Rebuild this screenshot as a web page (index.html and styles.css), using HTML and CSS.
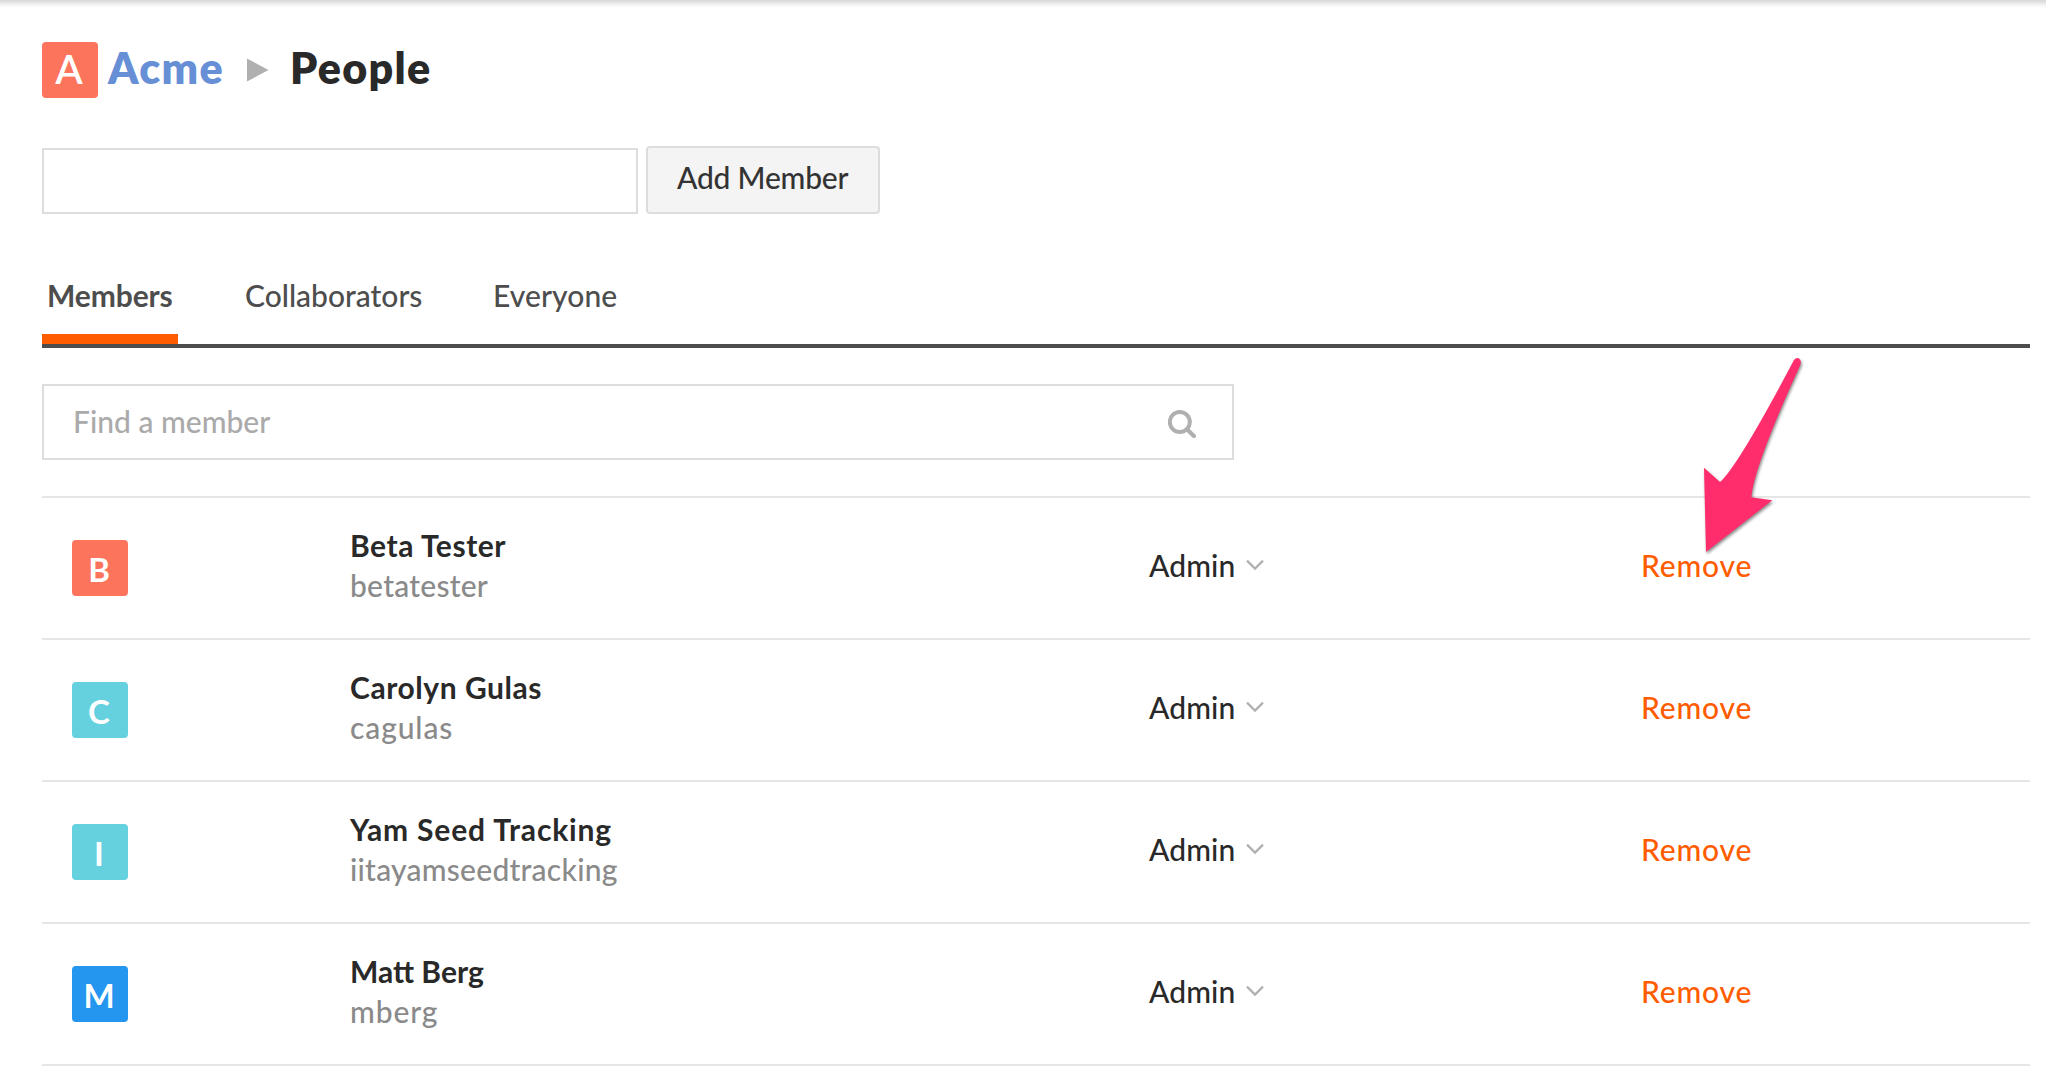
FILE: index.html
```
<!DOCTYPE html>
<html lang="en">
<head>
<meta charset="utf-8">
<title>Acme - People</title>
<link rel="stylesheet" href="styles.css">
</head>
<body>
<main class="page">
  <header class="crumbs">
    <span class="crumb-tile">A</span>
    <a class="crumb-link">Acme</a>
    <svg class="crumb-arrow" width="22" height="24" viewBox="0 0 22 24"><path d="M0 0.5 L21.5 12 L0 23.5 Z" fill="#b0b0b0"/></svg>
    <h1 class="crumb-title">People</h1>
  </header>

  <form class="add-form">
    <input class="add-input" type="text" aria-label="Username">
    <button class="add-button" type="button">Add Member</button>
  </form>

  <nav class="tabs">
    <a class="tab tab-active">Members</a>
    <a class="tab tab-collaborators">Collaborators</a>
    <a class="tab tab-everyone">Everyone</a>
  </nav>

  <div class="search">
    <input class="search-input" type="text" placeholder="Find a member">
    <svg class="search-icon" width="28" height="28" viewBox="0 0 28 28" fill="none" stroke="#b0b0b0"><circle cx="11.8" cy="12" r="10" stroke-width="4"/><path d="M19 19.3 L25.9 26" stroke-width="4.2" stroke-linecap="round"/></svg>
  </div>

  <ul class="members">
    <li class="member">
      <span class="tile tile-coral">B</span>
      <div class="who"><div class="name">Beta Tester</div><div class="username">betatester</div></div>
      <div class="role">Admin<svg class="chevron" width="20" height="12" viewBox="0 0 20 12"><path d="M2 1.6 L10 9.6 L18 1.6"/></svg></div>
      <a class="remove">Remove</a>
    </li>
    <li class="member">
      <span class="tile tile-teal">C</span>
      <div class="who"><div class="name">Carolyn Gulas</div><div class="username username-wide">cagulas</div></div>
      <div class="role">Admin<svg class="chevron" width="20" height="12" viewBox="0 0 20 12"><path d="M2 1.6 L10 9.6 L18 1.6"/></svg></div>
      <a class="remove">Remove</a>
    </li>
    <li class="member">
      <span class="tile tile-teal">I</span>
      <div class="who"><div class="name name-wide">Yam Seed Tracking</div><div class="username">iitayamseedtracking</div></div>
      <div class="role">Admin<svg class="chevron" width="20" height="12" viewBox="0 0 20 12"><path d="M2 1.6 L10 9.6 L18 1.6"/></svg></div>
      <a class="remove">Remove</a>
    </li>
    <li class="member">
      <span class="tile tile-blue">M</span>
      <div class="who"><div class="name name-tight">Matt Berg</div><div class="username username-wide">mberg</div></div>
      <div class="role">Admin<svg class="chevron" width="20" height="12" viewBox="0 0 20 12"><path d="M2 1.6 L10 9.6 L18 1.6"/></svg></div>
      <a class="remove">Remove</a>
    </li>
  </ul>
</main>

<svg class="pointer" width="110" height="210" viewBox="1696 350 110 210"><path d="M1794 360 Q1797 356.5 1800 359.5 Q1801.5 361.5 1800.3 365 Q1754 466 1751.3 497.3 L1772.3 500.3 L1706 552 L1704 467.7 L1720 482 Q1738 466 1794 360 Z" fill="#ff2d6c"/></svg>
</body>
</html>
```
FILE: styles.css
```
* { box-sizing: border-box; }

body {
  margin: 0;
  height: 1070px;
  overflow: hidden;
  background: linear-gradient(#d6d6d6, #e8e8e8 3px, #fafafa 6px, #fff 9px) top / 100% 9px no-repeat #fff;
  font-family: "Lato", "Open Sans", sans-serif;
  font-size: 30px;
  font-weight: 500;
  line-height: 40px;
  color: #292929;
}

.page { padding: 42px 16px 0 42px; }

.crumbs {
  display: flex;
  align-items: flex-start;
  height: 56px;
}

.crumb-tile {
  width: 56px;
  height: 56px;
  margin-right: 10px;
  padding-right: 2px;
  border-radius: 4px;
  background: #fc745c;
  color: #fff;
  font-size: 40px;
  font-weight: 600;
  line-height: 54px;
  text-align: center;
}

.crumb-link,
.crumb-title {
  margin: 0;
  font-size: 43px;
  font-weight: 800;
  line-height: 52px;
  letter-spacing: 1.3px;
}

.crumb-link { width: 118px; color: #668fd6; }
.crumb-arrow { margin: 16px 0 0 21px; }
.crumb-title { margin-left: 21px; }

.add-form {
  display: flex;
  align-items: flex-end;
  gap: 8px;
  margin-top: 48px;
}

.add-input {
  width: 596px;
  height: 66px;
  border: 2px solid #ddd;
  background: #fff;
}

.add-button {
  width: 234px;
  height: 68px;
  padding: 0 0 5px 29px;
  border: 2px solid #ddd;
  border-radius: 4px;
  background: #f4f4f4;
  color: #333;
  font: 500 30px/57px "Lato", "Open Sans", sans-serif;
  letter-spacing: -0.2px;
  text-align: left;
}

.tabs {
  display: flex;
  gap: 62px;
  margin-top: 60px;
  border-bottom: 4px solid #4d4d4d;
  color: #4d4d4d;
}

.tab {
  height: 70px;
  padding: 1px 0 0 5px;
}

.tab-active {
  width: 136px;
  border-bottom: 10px solid #ff5c00;
  font-weight: 700;
  letter-spacing: -0.1px;
}

.tab-collaborators { width: 186px; }
.tab-everyone { letter-spacing: 0.1px; }

.search {
  display: flex;
  width: 1192px;
  height: 76px;
  margin-top: 36px;
  border: 2px solid #ddd;
}

.search-input {
  flex: 1;
  height: 69px;
  padding: 0 0 0 29px;
  border: 0;
  background: none;
  font: 500 30px "Lato", "Open Sans", sans-serif;
}

.search-input::placeholder { color: #aaa; }
.search-icon { margin: 24px 36px 0 0; }

.members {
  margin: 36px 0 0;
  padding: 0;
  list-style: none;
  border-bottom: 2px solid #e6e6e6;
}

.member {
  display: grid;
  grid-template-columns: 308px 799px 492px 1fr;
  align-items: start;
  height: 142px;
  border-top: 2px solid #e6e6e6;
}

.tile {
  width: 56px;
  height: 56px;
  margin: 42px 0 0 30px;
  padding: 1px 2px 0 0;
  border-radius: 4px;
  color: #fff;
  font-size: 33px;
  font-weight: 700;
  line-height: 56px;
  text-align: center;
}

.tile-coral { background: #fc745c; }
.tile-teal { background: #66d1de; }
.tile-blue { background: #2596f0; }

.who { margin-top: 27px; }
.name { font-weight: 700; letter-spacing: 0.55px; }
.name-wide { letter-spacing: 0.85px; }
.name-tight { letter-spacing: 0; }
.username { color: #8a8a8a; letter-spacing: 0.25px; }
.username-wide { letter-spacing: 0.9px; }

.role {
  display: flex;
  margin-top: 47px;
  letter-spacing: 0.1px;
}

.chevron {
  margin: 14px 0 0 10px;
  fill: none;
  stroke: #b0b0b0;
  stroke-width: 2.2;
}

.remove {
  margin-top: 47px;
  color: #ff5c00;
  letter-spacing: 0.8px;
}

.pointer {
  position: absolute;
  left: 1696px;
  top: 350px;
  filter: drop-shadow(1px 2px 1.5px rgba(0, 0, 0, 0.45));
}
```
